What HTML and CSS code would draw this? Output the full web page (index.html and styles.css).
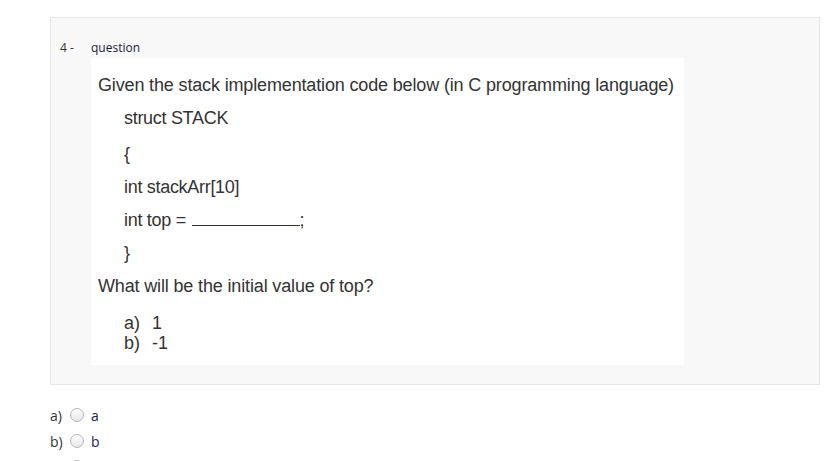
FILE: index.html
```html
<!DOCTYPE html>
<html>
<head>
<meta charset="utf-8">
<link rel="stylesheet" href="styles.css">
</head>
<body>
<div class="page">
  <div class="qbox">
    <div class="qnum">4 -</div>
    <div class="qbody">
      <div class="qlabel">question</div>
      <div class="qimage">
        <p class="line intro">Given the stack implementation code below (in C programming language)</p>
        <p class="line code first">struct STACK</p>
        <p class="line code">{</p>
        <p class="line code">int stackArr[10]</p>
        <p class="line code">int top = <span class="blank"></span>;</p>
        <p class="line code">}</p>
        <p class="line intro">What will be the initial value of top?</p>
        <div class="opts">
          <div class="opt"><span class="ol">a)</span><span>1</span></div>
          <div class="opt"><span class="ol">b)</span><span>-1</span></div>
        </div>
      </div>
    </div>
  </div>
  <div class="answers">
    <label class="ans"><span class="al">a)</span><span class="radio"></span><span class="at">a</span></label>
    <label class="ans"><span class="al">b)</span><span class="radio"></span><span class="at">b</span></label>
    <label class="ans"><span class="al">c)</span><span class="radio"></span><span class="at">c</span></label>
  </div>
</div>
</body>
</html>
```
FILE: styles.css
```css
* { box-sizing: border-box; }
html, body { margin: 0; padding: 0; background: #fff; }
body { font-family: "Open Sans", "Liberation Sans", sans-serif; }
.page { padding: 17px 20px 0 50px; width: 840px; }
.qbox {
  width: 770px;
  background: #f8f8f8;
  border: 1px solid #e6e6e6;
  display: flex;
  padding: 22px 0 19px 9px;
}
.qnum { width: 31px; font-size: 12px; color: #333; line-height: 16px; }
.qbody { display: flex; flex-direction: column; }
.qlabel { font-size: 12px; color: #1a1a3a; line-height: 16px; margin-bottom: 2px; }
.qimage {
  width: 593px;
  height: 307px;
  background: #fff;
  padding: 11px 0 0 7px;
  font-family: "Liberation Sans", Arial, sans-serif;
  color: #333;
  font-size: 18px;
}
.line { margin: 0; line-height: 33px; height: 33px; }
.line.intro { letter-spacing: -0.15px; }
.line.code { padding-left: 26px; letter-spacing: -0.3px; }
.line.first { margin-bottom: 3px; }
.blank { display: inline-block; width: 108px; border-bottom: 1px solid #333; height: 14px; margin-left: 1px; }
.opts { padding-left: 26px; padding-top: 10px; }
.opt { line-height: 20px; display: flex; gap: 10px; }
.ol { width: 18px; }
.answers { padding-top: 17px; }
.ans { display: flex; align-items: center; height: 26px; font-size: 14px; color: #1a1a3a; }
.al { width: 20px; color: #333; }
.radio {
  width: 14px; height: 14px; border-radius: 50%;
  border: 1px solid #b5b5b5;
  background: linear-gradient(#fdfdfd, #e8e8e8);
  margin-right: 7px;
}
.at { color: #1b1b4b; }
```
